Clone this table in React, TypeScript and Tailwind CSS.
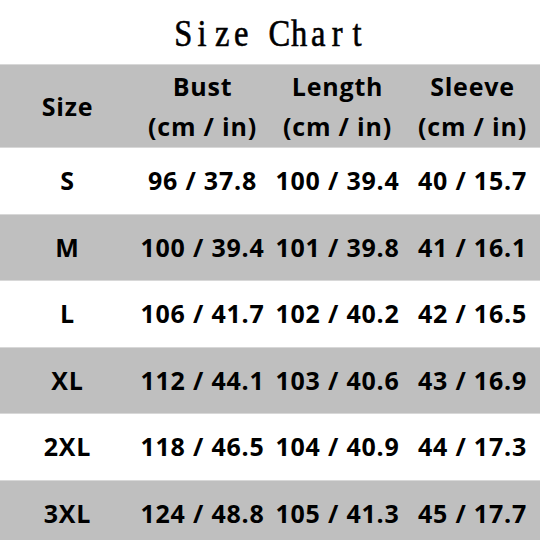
import React from "react";

const rows = [
  ["S", "96 / 37.8", "100 / 39.4", "40 / 15.7"],
  ["M", "100 / 39.4", "101 / 39.8", "41 / 16.1"],
  ["L", "106 / 41.7", "102 / 40.2", "42 / 16.5"],
  ["XL", "112 / 44.1", "103 / 40.6", "43 / 16.9"],
  ["2XL", "118 / 46.5", "104 / 40.9", "44 / 17.3"],
  ["3XL", "124 / 48.8", "105 / 41.3", "45 / 17.7"],
];

const title = "Size Chart".split("");

export default function App() {
  return (
    <div className="w-[540px] h-[540px] overflow-hidden bg-white text-black">
      <div className="h-[64px] flex items-center justify-center">
        <h1
          className="flex text-[37px] leading-none pt-[2px] font-['Liberation_Serif','Times_New_Roman',serif]"
          style={{ WebkitTextStroke: "0.6px black" }}
        >
          {title.map((ch, i) => (
            <span key={i} className="flex justify-center w-[19.3px]">
              <span className="inline-block scale-x-[0.88] origin-center">
                {ch === " " ? "\u00a0" : ch}
              </span>
            </span>
          ))}
        </h1>
      </div>
      <div
        className="font-bold text-[25px] leading-none tracking-[0.8px]"
        style={{ fontFamily: '"Open Sans", "Noto Sans", sans-serif' }}
      >
        <div className="h-[83px] bg-[#bfbfbf] grid grid-cols-4 border-t border-[#d8d8d8]">
          <div className="flex items-center justify-center">Size</div>
          {["Bust", "Length", "Sleeve"].map((h) => (
            <div key={h} className="flex flex-col items-center justify-center gap-[15px]">
              <span>{h}</span>
              <span>(cm / in)</span>
            </div>
          ))}
        </div>
        {rows.map((r, i) => (
          <div
            key={r[0]}
            className={
              "h-[66.5px] grid grid-cols-4 border-t border-[#d8d8d8] " +
              (i % 2 === 1 ? "bg-[#bfbfbf]" : "bg-white")
            }
          >
            {r.map((c, j) => (
              <div key={j} className="flex items-center justify-center">
                {c}
              </div>
            ))}
          </div>
        ))}
      </div>
    </div>
  );
}
